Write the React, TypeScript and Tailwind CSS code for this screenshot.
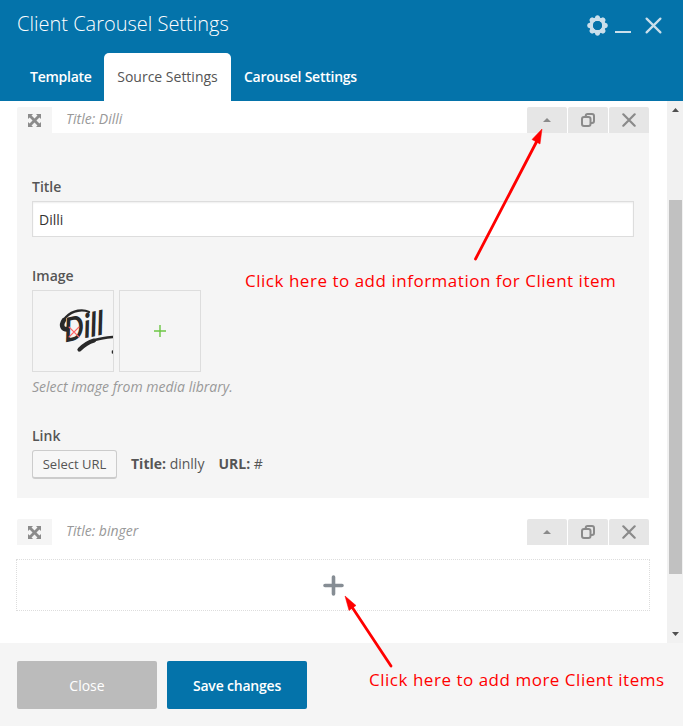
import React from "react";

function Cross({ size, width, className }: { size: number; width: number; className?: string }) {
  return (
    <svg width={size} height={size} viewBox="0 0 16 16" className={className} fill="none" stroke="currentColor" strokeWidth={width} strokeLinecap="round">
      <path d="M1.5 1.5 14.5 14.5M14.5 1.5 1.5 14.5" />
    </svg>
  );
}

function Gear() {
  return (
    <svg width="21" height="21" viewBox="-10.5 -10.5 21 21" fill="#cbdfeb">
      {[0, 45, 90, 135, 180, 225, 270, 315].map((a) => (
        <path key={a} d="M-3.4-6 -1.9-9.6Q0-10.9 1.9-9.6L3.4-6Z" transform={`rotate(${a})`} />
      ))}
      <circle r="6.2" fill="none" stroke="#cbdfeb" strokeWidth="3.4" />
      <circle r="4.5" fill="#0473aa" />
    </svg>
  );
}

function MoveIcon() {
  return (
    <svg width="13" height="13" viewBox="0 0 14 14" fill="#8b8b8b">
      <path d="M0 0h5.4L3.8 1.7 7 4.9l3.2-3.2L8.6 0H14v5.4l-1.7-1.6L9.1 7l3.2 3.2L14 8.6V14H8.6l1.6-1.7L7 9.1l-3.2 3.2L5.4 14H0V8.6l1.7 1.6L4.9 7 1.7 3.8 0 5.4Z" />
    </svg>
  );
}

function ItemBar({ title }: { title: string }) {
  return (
    <div className="flex h-[26px]">
      <div className="flex w-[35px] items-center justify-center rounded-tl-[2px] bg-[#f5f5f5]">
        <MoveIcon />
      </div>
      <div className="ml-[14px] flex-1 text-[14px] leading-[24px] text-[#999] italic">{title}</div>
      <div className="flex gap-px text-[#8a8a8a]">
        <button className="flex w-10 items-center justify-center rounded-t-[2px] bg-[#e6e6e6]">
          <svg width="8" height="4" viewBox="0 0 8 4"><path d="M4 0 8 4H0Z" fill="currentColor" /></svg>
        </button>
        <button className="flex w-10 items-center justify-center rounded-t-[2px] bg-[#e6e6e6]">
          <svg width="14" height="14" viewBox="0 0 14 14" fill="none" stroke="currentColor" strokeWidth="2">
            <rect x="1" y="4" width="8.5" height="9" rx="2" />
            <path d="M4.7 4V3Q4.7 1 6.7 1H11Q13 1 13 3V8Q13 10 11 10H9.5" />
          </svg>
        </button>
        <button className="flex w-10 items-center justify-center rounded-t-[2px] bg-[#e6e6e6]">
          <Cross size={14} width={2.5} />
        </button>
      </div>
    </div>
  );
}

function Thumbnail() {
  return (
    <div className="relative h-[82px] w-[82px] overflow-hidden border border-[#ddd]">
      <svg width="80" height="80" viewBox="0 0 80 80" fill="none" stroke="#292929" strokeLinecap="round">
        <path d="M35 39.5C28 40 27 32 33 26C40 19 50 18 56 21" strokeWidth="2.4" />
        <path d="M31 29C27 35 30 38.5 34 38" strokeWidth="4.5" />
        <path d="M46 59C57 48 69 47 80 46" strokeWidth="2.6" />
        <path d="M46.5 58.5C51 54 56 51 61 49.5" strokeWidth="4" />
        <path d="M79.5 60V62" strokeWidth="1.5" />
        <text x="39" y="50" textLength="40" lengthAdjust="spacingAndGlyphs" transform="rotate(-12 39 50) skewX(-8)" fill="#292929" stroke="none" className="font-['Lato'] text-[33px] font-bold italic">Dill</text>
      </svg>
      <Cross size={12} width={1.8} className="absolute top-[35px] left-[35px] text-[#ff6666]" />
    </div>
  );
}

function Scrollbar() {
  return (
    <div className="flex w-4 flex-col items-center bg-[#f1f1f1] pt-[7px] pb-[7px]">
      <svg width="7" height="4" viewBox="0 0 7 4" className="ml-px"><path d="M3.5 0 7 4H0Z" fill="#505050" /></svg>
      <div className="mt-[88px] ml-px h-[374px] w-[13px] bg-[#c1c1c1]" />
      <svg width="7" height="4" viewBox="0 0 7 4" className="mt-auto ml-px"><path d="M0 0H7L3.5 4Z" fill="#505050" /></svg>
    </div>
  );
}

export default function App() {
  return (
    <div className="relative flex h-[726px] w-[683px] flex-col overflow-hidden bg-white font-['Open_Sans',sans-serif] text-[14px] text-[#555]">
      <header className="h-[101px] bg-[#0473aa] text-white">
        <div className="flex h-[53px] justify-between pl-[17px]">
          <h1 className="pt-[9px] text-[20px] leading-[30px] font-light">Client Carousel Settings</h1>
          <div className="flex pt-[15px] pr-[21px] text-[#cbdfeb]">
            <Gear />
            <div className="mt-[16px] ml-[7px] h-[2px] w-4 bg-[#cbdfeb]" />
            <Cross size={17} width={2.1} className="mt-[2px] ml-[14px]" />
          </div>
        </div>
        <nav className="flex h-12 pl-[17px] leading-[48px] font-semibold">
          <div className="w-[87px] pl-[13px] tracking-[-0.25px]">Template</div>
          <div className="w-[127px] rounded-t-[5px] bg-white text-center font-normal text-[#555]">Source Settings</div>
          <div className="pl-[13px] tracking-[-0.25px]">Carousel Settings</div>
        </nav>
      </header>
      <main className="flex h-[542px]">
        <div className="w-[667px] pt-[6px] pr-[18px] pl-[17px]">
          <ItemBar title="Title: Dilli" />
          <section className="h-[365px] bg-[#f5f5f5] px-[15px] pt-[44px]">
            <div className="leading-[20px] font-semibold">Title</div>
            <div className="mt-[4px] h-9 w-[602px] border border-[#ddd] bg-white px-[6px] leading-[35px] text-[#333] shadow-[inset_0_1px_2px_rgba(0,0,0,0.07)]">Dilli</div>
            <div className="mt-[29px] leading-[20px] font-semibold">Image</div>
            <div className="mt-[4px] flex gap-[5px]">
              <Thumbnail />
              <div className="flex h-[82px] w-[82px] items-center justify-center border border-[#ddd]">
                <svg width="12" height="12" viewBox="0 0 12 12" stroke="#6cc644" strokeWidth="1.4"><path d="M0 6H12M6 0V12" /></svg>
              </div>
            </div>
            <div className="mt-[5px] leading-[20px] text-[#999] italic">Select image from media library.</div>
            <div className="mt-[29px] leading-[20px] font-semibold">Link</div>
            <div className="mt-[4px] flex h-[29px] leading-[27px]">
              <button className="w-[85px] rounded-[3px] border border-b-2 border-[#ccc] bg-[#f7f7f7] text-[13px] leading-[26px]">Select URL</button>
              <div className="ml-[14px]"><b>Title:</b> dinlly</div>
              <div className="ml-[14px]"><b>URL:</b> #</div>
            </div>
          </section>
          <div className="mt-[21px]"><ItemBar title="Title: binger" /></div>
          <div className="mt-[14px] -mr-px -ml-px flex h-[52px] items-center justify-center border border-dotted border-[#ddd]">
            <svg width="21" height="21" viewBox="0 0 21 21" stroke="#868d94" strokeWidth="3.6" strokeLinecap="round"><path d="M2 10.5H19M10.5 2V19" /></svg>
          </div>
        </div>
        <Scrollbar />
      </main>
      <footer className="flex h-[83px] gap-[10px] bg-[#f5f5f5] pt-[18px] pl-[17px] text-white">
        <button className="h-12 w-[140px] rounded-[2px] bg-[#bbb]">Close</button>
        <button className="h-12 w-[140px] rounded-[2px] bg-[#0473aa] font-semibold tracking-[-0.2px]">Save changes</button>
      </footer>
      <div className="absolute top-[269px] left-[245px] text-[17px] leading-[24px] tracking-[0.52px] whitespace-nowrap text-[#f00]">Click here to add information for Client item</div>
      <div className="absolute top-[668px] left-[369px] text-[17px] leading-[24px] tracking-[0.52px] whitespace-nowrap text-[#f00]">Click here to add more Client items</div>
      <svg width="683" height="726" className="pointer-events-none absolute inset-0" fill="#f00" stroke="#f00">
        <path d="M475.5 259 538 139M391 666 350 604" strokeWidth="2.8" strokeLinecap="round" />
        <path d="M542 129 540 144 532 139.5Z M345 596 356 605.5 349 610.5Z" strokeWidth=".5" />
      </svg>
    </div>
  );
}
